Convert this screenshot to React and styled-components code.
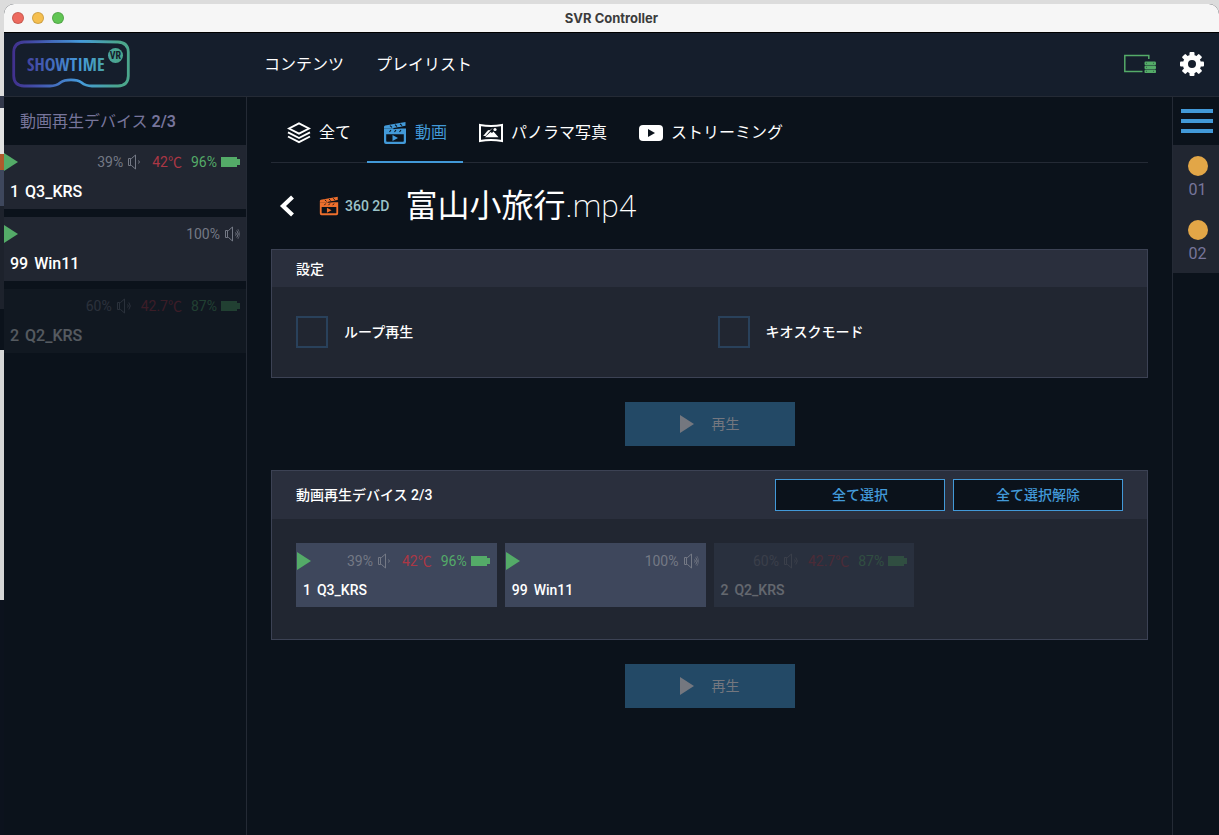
import styled, { createGlobalStyle, css } from 'styled-components'

const GlobalStyle = createGlobalStyle`
  * {
    box-sizing: border-box;
  }
  body {
    margin: 0;
    background: #0b121b;
    color: #fff;
    font-family: Roboto, 'Noto Sans CJK JP', sans-serif;
    font-size: 16px;
    line-height: 24px;
  }
  button {
    font: inherit;
    color: inherit;
    border: 0;
    padding: 0;
    background: none;
    cursor: pointer;
  }
  h1, h2, ul {
    margin: 0;
    padding: 0;
    font-weight: inherit;
    font-size: inherit;
  }
  ul {
    list-style: none;
  }
  svg {
    display: block;
    flex: none;
  }
`

const devices = [
  { id: 1, name: 'Q3_KRS', volume: 39, temp: '42', battery: 96, online: true },
  { id: 99, name: 'Win11', volume: 100, online: true },
  { id: 2, name: 'Q2_KRS', volume: 60, temp: '42.7', battery: 87 },
]

const Logo = () => (
  <svg width='118' height='48' viewBox='0 0 118 48' role='img' aria-label='SHOWTIME VR'>
    <defs>
      <linearGradient id='brand' gradientUnits='userSpaceOnUse' x1='0' y1='0' x2='118' y2='0'>
        <stop offset='0' stopColor='#412f8c' />
        <stop offset='0.22' stopColor='#4353ad' />
        <stop offset='0.58' stopColor='#459bdb' />
        <stop offset='0.9' stopColor='#4ba68c' />
        <stop offset='1' stopColor='#4ba68c' />
      </linearGradient>
    </defs>
    <path
      d='M12 2Q59 .6 106 2Q116 2.500 116.300 12V36Q116 45.800 106 46H80C75 46 72.500 45 69.500 42.500C65 39 53 39 48.500 42.500C45.500 45 43 46 38 46H12Q2 45.800 1.700 36V12Q2 2.500 12 2Z'
      fill='none'
      stroke='url(#brand)'
      strokeWidth='2.8'
    />
    <LogoText x='15' y='31' fill='url(#brand)'>
      SHOWTIME
    </LogoText>
    <circle cx='103.500' cy='15.500' r='7.500' fill='url(#brand)' />
    <LogoMark x='103.500' y='19' textAnchor='middle' fill='#151e2c'>
      VR
    </LogoMark>
  </svg>
)

const LayersIcon = () => (
  <svg width='24' height='24' viewBox='0 0 24 24' fill='none' stroke='#fff' strokeWidth='1.900'>
    <path d='M12 2.300 22 7.500 12 12.700 2 7.500Z' />
    <path d='M1 11.300 12 17l11-5.700M1 15.500l11 5.700 11-5.700' />
  </svg>
)

const ClapperIcon = ({ size = 24 }) => (
  <svg width={size} height={size} viewBox='0 0 24 24' fill='currentColor'>
    <path d='M1 6Q1 4.800 2.200 4.600L22.500 1V4.800L10 7.400H1Z' />
    <path
      fillRule='evenodd'
      d='M1 7.400H23V21Q23 23 21 23H3Q1 23 1 21ZM3.200 13.200V20Q3.200 20.800 4 20.800H20Q20.800 20.800 20.800 20V13.200Z'
    />
    <path d='M9.500 14v6l5.500-3Z' />
    <path
      d='m7 4.600 2 1.800M12 3.700l2 1.800M17 2.800l2 1.800M8 9l-1.500 2M13 9l-1.500 2M18 9l-1.500 2M10.500 7.600 23 5.800'
      stroke='#0b121b'
      strokeWidth='1.100'
      fill='none'
    />
  </svg>
)

const PanoramaIcon = () => (
  <svg width='24' height='24' viewBox='0 0 24 24' fill='#fff'>
    <path
      d='M1 4Q12 5.800 23 4V20Q12 18.200 1 20Z'
      fill='none'
      stroke='#fff'
      strokeWidth='2'
    />
    <path d='M6 16.200 11.500 11l1.500 1 1.500-1.500 5 5.700Z' />
    <path d='M4.500 15 9 9.500h2L6.500 15M10 10.500l3-3' stroke='#fff' strokeWidth='.6' />
    <circle cx='16' cy='8.500' r='1.600' />
  </svg>
)

const StreamIcon = () => (
  <svg width='24' height='24' viewBox='0 0 24 24'>
    <rect y='4' width='24' height='16' rx='4' fill='#fff' />
    <path d='M9 8v8l7-4Z' fill='#0b121b' />
  </svg>
)

const ChevronIcon = () => (
  <svg width='16' height='24' viewBox='0 0 16 24' fill='none' stroke='#fff' strokeWidth='4.200'>
    <path d='M13.500 3 4 12l9.500 9' />
  </svg>
)

const PlayIcon = () => (
  <svg width='14' height='18' viewBox='0 0 14 18' fill='currentColor'>
    <path d='M0 0v18l14-9Z' />
  </svg>
)

const SpeakerIcon = ({ level }) => (
  <svg width='16' height='16' viewBox='0 0 16 16' fill='none' stroke='currentColor'>
    <path d='M1.500 4.500h2v7h-2ZM3.500 4.500h1L8.500 1v14L4.500 11.500h-1' />
    <path d='M11.500 6.500q1.800 1.500 0 3' />
    {level > 50 && <path d='M12.800 4.500q3 3.500 0 7' />}
    {level > 80 && <path d='M13.800 3q3.400 5 0 10' strokeWidth='.6' />}
  </svg>
)

const BatteryIcon = () => (
  <svg width='19' height='10' viewBox='0 0 19 10' fill='currentColor'>
    <path d='M0 0h16v2h3v6h-3v2H0Z' />
  </svg>
)

const ServerIcon = () => (
  <svg width='32' height='20' viewBox='0 0 32 20' fill='none' stroke='#54ab68'>
    <path d='M24.800 5V1.500H.8v16H18.500' strokeWidth='1.500' />
    <g fill='#54ab68' stroke='none'>
      <rect x='20.500' y='7.500' width='11.500' height='3.600' rx='1.200' />
      <rect x='20.500' y='11.500' width='11.500' height='3.600' rx='1.200' />
      <rect x='20.500' y='15.500' width='11.500' height='3.600' rx='1.200' />
    </g>
    <path d='M22 9.300h1M22 13.300h1M22 17.300h1M29 9.300h1M29 17.300h1' stroke='#151e2c' strokeWidth='.5' />
  </svg>
)

const GearIcon = () => (
  <svg width='24' height='24' viewBox='-12 -12 24 24' fill='#fff'>
    <circle r='6.600' fill='none' stroke='#fff' strokeWidth='5.200' />
    {[0, 45, 90, 135].map((angle) => (
      <g key={angle} transform={`rotate(${angle})`}>
        <rect x='-2.500' y='-12' width='5' height='5' rx='1' />
        <rect x='-2.500' y='7' width='5' height='5' rx='1' />
      </g>
    ))}
  </svg>
)

const MenuIcon = () => (
  <svg width='32' height='24' viewBox='0 0 32 24' fill='#4299d8'>
    <path d='M0 0h32v4H0zM0 10h32v4H0zM0 20h32v4H0z' />
  </svg>
)

const Device = ({ device, ...props }) => {
  const { id, name, volume, temp, battery, online } = device
  return (
    <DeviceCard $dim={!online} {...props}>
      <Status>
        {online && (
          <Playing>
            <PlayIcon />
          </Playing>
        )}
        <Stat $color='#747985'>
          {volume}%
          <SpeakerIcon level={volume} />
        </Stat>
        {temp && <Stat $color='#ab3745'>{temp}℃</Stat>}
        {battery && (
          <Stat $color='#54ab68'>
            {battery}%
            <BatteryIcon />
          </Stat>
        )}
      </Status>
      <DeviceName>
        <span>{id}</span>
        <span>{name}</span>
      </DeviceName>
    </DeviceCard>
  )
}

const App = () => {
  return (
    <Desktop>
      <GlobalStyle />
      <Window>
        <TitleBar>
          <Light $color='#ed6a5f' />
          <Light $color='#f5bf4f' />
          <Light $color='#61c554' />
          <WindowTitle>SVR Controller</WindowTitle>
        </TitleBar>
        <Header>
          <Logo />
          <Nav>
            <a href='#contents'>コンテンツ</a>
            <a href='#playlist'>プレイリスト</a>
          </Nav>
          <Tools>
            <button type='button' aria-label='server'>
              <ServerIcon />
            </button>
            <button type='button' aria-label='settings'>
              <GearIcon />
            </button>
          </Tools>
        </Header>
        <Body>
          <Sidebar>
            <SidebarTitle>
              動画再生デバイス <strong>2/3</strong>
            </SidebarTitle>
            <SidebarList>
              {devices.map((device) => (
                <li key={device.id}>
                  <Device device={device} />
                </li>
              ))}
            </SidebarList>
          </Sidebar>

          <Main>
            <Tabs>
              <Tab href='#all'>
                <LayersIcon />
                全て
              </Tab>
              <Tab href='#video' $active>
                <ClapperIcon />
                動画
              </Tab>
              <Tab href='#panorama'>
                <PanoramaIcon />
                パノラマ写真
              </Tab>
              <Tab href='#streaming'>
                <StreamIcon />
                ストリーミング
              </Tab>
            </Tabs>

            <FileHeading>
              <button type='button' aria-label='back'>
                <ChevronIcon />
              </button>
              <Format>
                <ClapperIcon size={20} />
                <span>360 2D</span>
              </Format>
              <FileName>
                富山小旅行<span>.mp4</span>
              </FileName>
            </FileHeading>

            <Panel>
              <PanelHeader>
                <h2>設定</h2>
              </PanelHeader>
              <Options>
                <Option>
                  <Checkbox type='checkbox' />
                  ループ再生
                </Option>
                <Option>
                  <Checkbox type='checkbox' />
                  キオスクモード
                </Option>
              </Options>
            </Panel>

            <PlayButton type='button' disabled>
              <PlayIcon />
              再生
            </PlayButton>

            <Panel>
              <PanelHeader $tall>
                <h2>動画再生デバイス 2/3</h2>
                <Actions>
                  <OutlineButton type='button'>全て選択</OutlineButton>
                  <OutlineButton type='button'>全て選択解除</OutlineButton>
                </Actions>
              </PanelHeader>
              <DeviceGrid>
                {devices.map((device) => (
                  <Device
                    key={device.id}
                    device={device}
                    as='button'
                    type='button'
                    $tile
                    disabled={!device.online}
                  />
                ))}
              </DeviceGrid>
            </Panel>

            <PlayButton type='button' disabled>
              <PlayIcon />
              再生
            </PlayButton>
          </Main>

          <Rail>
            <MenuButton type='button' aria-label='menu'>
              <MenuIcon />
            </MenuButton>
            <ul>
              {['01', '02'].map((slot) => (
                <Slot key={slot}>
                  <Dot />
                  {slot}
                </Slot>
              ))}
            </ul>
          </Rail>
        </Body>
      </Window>
    </Desktop>
  )
}

const Desktop = styled.div`
  display: flex;
  min-height: 100vh;
  padding: 4px 0 0 4px;
  background: linear-gradient(
    #dcdcdc 96px,
    #33394c 96px 108px,
    #e2e2e2 108px 154px,
    #b05a2c 154px 170px,
    #3e475c 170px 206px,
    #1d222c 206px 309px,
    #0b121b 309px 350px,
    #d6d6d6 350px 600px,
    #0c121d 600px
  );
`

const Window = styled.div`
  flex: 1;
  min-width: 0;
  display: flex;
  flex-direction: column;
  overflow: hidden;
  background: #0b121b;
  border-radius: 10px 10px 0 0;
`

const TitleBar = styled.div`
  position: relative;
  display: flex;
  align-items: center;
  gap: 8px;
  height: 29px;
  padding: 0 8px;
  background: #f6f6f6;
  border-bottom: 1px solid #000;
`

const Light = styled.span`
  width: 12px;
  height: 12px;
  border-radius: 50%;
  background: ${(props) => props.$color};
  border: 1px solid rgba(0, 0, 0, 0.15);
`

const WindowTitle = styled.span`
  position: absolute;
  inset: 0;
  display: flex;
  align-items: center;
  justify-content: center;
  color: #3c3c3c;
  font-family: Inter, sans-serif;
  font-size: 13px;
  font-weight: 700;
`

const Header = styled.header`
  display: grid;
  grid-template-columns: 244px 1fr auto;
  align-items: center;
  height: 64px;
  padding: 0 15px 1px 0;
  background: #151e2c;
  border-bottom: 1px solid #242a35;
  > svg {
    margin-left: 8px;
  }
`

const LogoText = styled.text`
  font-family: 'Open Sans Condensed', 'Noto Sans ExtraCondensed', 'Roboto Condensed', sans-serif;
  font-size: 18px;
  font-weight: 300;
`

const LogoMark = styled.text`
  font-family: 'Roboto Condensed', Roboto, sans-serif;
  font-size: 10px;
  font-weight: 700;
`

const Nav = styled.nav`
  display: flex;
  gap: 32px;
  padding: 2px 16px 0;
  a {
    color: #fff;
    text-decoration: none;
  }
`

const Tools = styled.div`
  display: flex;
  align-items: center;
  gap: 24px;
`

const Body = styled.div`
  flex: 1;
  display: flex;
`

const Sidebar = styled.aside`
  flex: none;
  width: 243px;
  border-right: 1px solid #242a35;
`

const SidebarTitle = styled.h2`
  padding: 13px 16px 11px;
  color: #77759b;
  strong {
    font-weight: 600;
  }
`

const SidebarList = styled.ul`
  display: flex;
  flex-direction: column;
  gap: 8px;
`

const DeviceCard = styled.div`
  display: flex;
  flex-direction: column;
  gap: 6px;
  width: 100%;
  height: 64px;
  padding: 5px 6px;
  background: #212631;
  font-weight: 500;
  text-align: left;
  opacity: ${(props) => (props.$dim ? 0.3 : 1)};
  ${(props) =>
    props.$tile &&
    css`
      gap: 5px;
      padding: 6px 7px;
      background: #3e475c;
      font-size: 14px;
      font-weight: 500;
    `}
`

const Status = styled.div`
  position: relative;
  display: flex;
  justify-content: flex-end;
  align-items: center;
  gap: 9px;
  width: 100%;
  height: 24px;
  font-size: 14px;
  font-weight: 400;
`

const Playing = styled.span`
  position: absolute;
  left: -6px;
  color: #54ab68;
`

const Stat = styled.span`
  display: flex;
  align-items: center;
  gap: 4px;
  color: ${(props) => props.$color};
`

const DeviceName = styled.div`
  display: flex;
  gap: 6px;
`

const Main = styled.main`
  flex: 1;
  min-width: 0;
  display: flex;
  flex-direction: column;
  gap: 24px;
  padding: 0 24px 24px;
`

const Tabs = styled.nav`
  display: flex;
  height: 66px;
  border-bottom: 1px solid #242a35;
`

const Tab = styled.a`
  display: flex;
  align-items: center;
  gap: 8px;
  margin-bottom: -1px;
  padding: 8px 16px 0;
  border-bottom: 2px solid transparent;
  color: #fff;
  text-decoration: none;
  ${(props) =>
    props.$active &&
    css`
      color: #4299d8;
      border-color: #4299d8;
    `}
`

const FileHeading = styled.div`
  display: flex;
  align-items: center;
  height: 38px;
  padding-left: 8px;
`

const Format = styled.span`
  display: flex;
  align-items: center;
  gap: 6px;
  margin: 0 16px 0 24px;
  color: #ee6f2d;
  font-size: 14px;
  span {
    color: #9cc3c9;
    font-weight: 500;
  }
`

const FileName = styled.h1`
  font-size: 32px;
  line-height: 40px;
  span {
    font-weight: 200;
  }
`

const Panel = styled.section`
  border: 1px solid #3c4254;
  background: #212631;
`

const PanelHeader = styled.div`
  display: flex;
  align-items: center;
  justify-content: space-between;
  height: ${(props) => (props.$tall ? 48 : 37)}px;
  padding: 0 24px;
  background: #2a2f3d;
  font-size: 14px;
  font-weight: 500;
`

const Options = styled.div`
  display: grid;
  grid-template-columns: 1fr 1fr;
  gap: 16px;
  padding: 29px 24px;
`

const Option = styled.label`
  display: flex;
  align-items: center;
  gap: 16px;
  font-size: 14px;
  font-weight: 500;
`

const Checkbox = styled.input`
  appearance: none;
  width: 32px;
  height: 32px;
  margin: 0;
  border: 2px solid #29415b;
  &:checked {
    background: #4299d8;
  }
`

const PlayButton = styled.button`
  align-self: center;
  display: flex;
  align-items: center;
  justify-content: center;
  gap: 18px;
  width: 170px;
  height: 44px;
  background: #234966;
  color: #74777f;
  font-size: 14px;
`

const Actions = styled.div`
  display: flex;
  gap: 8px;
`

const OutlineButton = styled.button`
  width: 170px;
  height: 32px;
  border: 1px solid #4299d8;
  background: #0b121b;
  color: #4299d8;
  font-size: 14px;
`

const DeviceGrid = styled.div`
  display: grid;
  grid-template-columns: repeat(4, 1fr);
  gap: 8px;
  padding: 24px 24px 32px;
`

const Rail = styled.aside`
  flex: none;
  width: 47px;
  border-left: 1px solid #242a35;
`

const MenuButton = styled.button`
  display: flex;
  align-items: center;
  justify-content: center;
  width: 100%;
  height: 48px;
  padding-left: 2px;
`

const Slot = styled.li`
  display: flex;
  flex-direction: column;
  align-items: center;
  gap: 2px;
  height: 64px;
  padding: 11px 0 0 3px;
  background: #212631;
  color: #77759b;
`

const Dot = styled.span`
  width: 20px;
  height: 20px;
  flex: none;
  border-radius: 50%;
  background: #e2a647;
`

export default App
